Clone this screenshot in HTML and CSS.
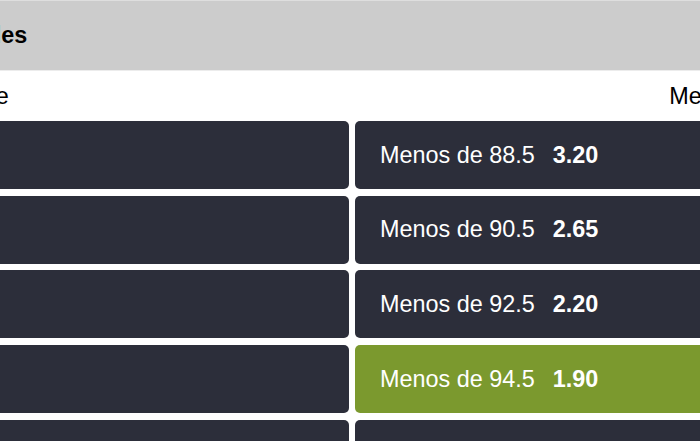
FILE: index.html
```html
<!DOCTYPE html>
<html lang="es">
<head>
  <meta charset="UTF-8" />
  <title>Totales</title>
  <link rel="stylesheet" href="styles.css">
</head>
<body>

  <div class="market">
    <div class="market-title">Totales</div>

    <div class="market-heads">
      <span>Más de</span>
      <span>Menos de</span>
    </div>

    <div class="odds-grid">
      <button class="odd"></button>
      <button class="odd"><span class="line">Menos de 88.5</span><span class="price">3.20</span></button>

      <button class="odd"></button>
      <button class="odd"><span class="line">Menos de 90.5</span><span class="price">2.65</span></button>

      <button class="odd"></button>
      <button class="odd"><span class="line">Menos de 92.5</span><span class="price">2.20</span></button>

      <button class="odd"></button>
      <button class="odd selected"><span class="line">Menos de 94.5</span><span class="price">1.90</span></button>

      <button class="odd"></button>
      <button class="odd"><span class="line">Menos de 96.5</span><span class="price">1.65</span></button>
    </div>
  </div>

</body>
</html>
```

FILE: styles.css
```css
* { margin: 0; padding: 0; box-sizing: border-box; font-family: 'Liberation Sans', Arial, sans-serif; }
html, body { overflow: hidden; background: white; }

.market { width: 860px; margin-left: -78px; }

.market-title {
  background: #cccccc; border-top: 1px solid #dedede; border-bottom: 1px solid #ececec;
  padding: 21px 25px; font-size: 23.4px; line-height: 27px; font-weight: bold; color: #000;
}

.market-heads {
  display: flex; justify-content: space-between;
  padding: 12px 10px 11px; font-size: 23.4px; line-height: 27px; color: #000;
}

.odds-grid {
  display: grid; grid-template-columns: 1fr 1fr; column-gap: 6px; row-gap: 6.7px;
}

.odd {
  height: 68px; border: none; border-radius: 5px; background: #2c2e3a; color: white;
  display: flex; align-items: center; gap: 18px; padding: 0 25px;
  font-size: 23.4px; line-height: 27px; text-align: left;
}
.odd.selected { background: #7b992e; }
.price { font-weight: bold; }
```
